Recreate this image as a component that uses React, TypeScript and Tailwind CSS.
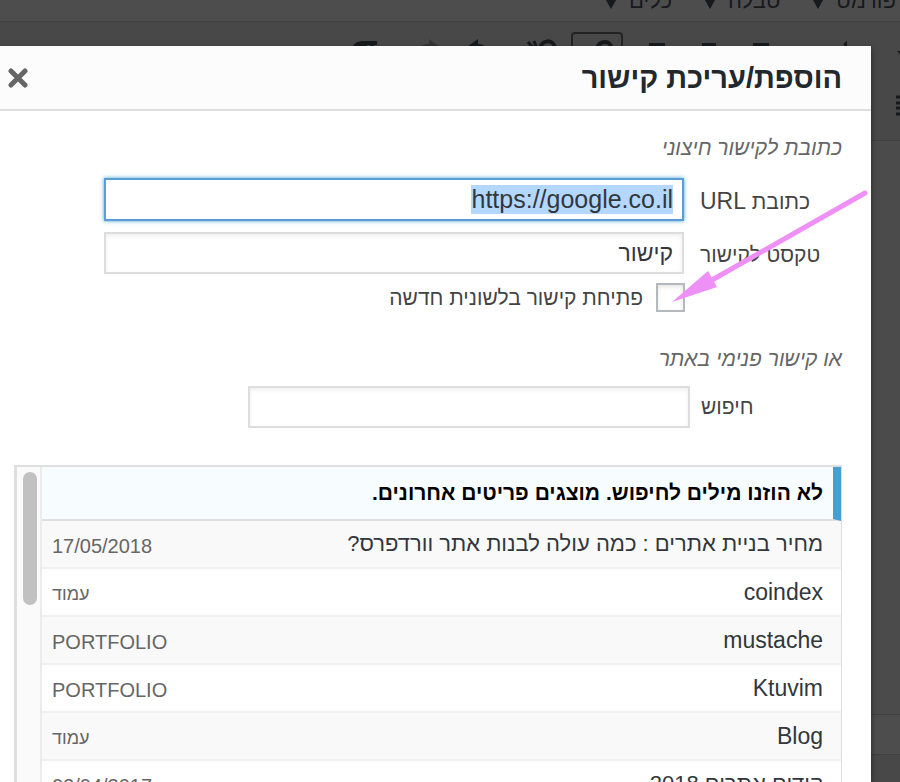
import { useEffect, useRef } from "react";
import type { ReactNode } from "react";

interface ToolProps {
  label: string;
  className?: string;
  children: ReactNode;
}

interface ResultProps {
  title: string;
  info: string;
  hebrewTitle?: boolean;
  hebrewInfo?: boolean;
}

const menus = ["פורמט", "טבלה", "כלים"];

const results: ResultProps[] = [
  { title: "מחיר בניית אתרים : כמה עולה לבנות אתר וורדפרס?", info: "17/05/2018", hebrewTitle: true },
  { title: "coindex", info: "עמוד", hebrewInfo: true },
  { title: "mustache", info: "PORTFOLIO" },
  { title: "Ktuvim", info: "PORTFOLIO" },
  { title: "Blog", info: "עמוד", hebrewInfo: true },
  { title: "קודים אתרים 2018", info: "02/04/2017", hebrewTitle: true },
];

function Tool({ label, className = "", children }: ToolProps) {
  return (
    <button
      type="button"
      aria-label={label}
      className={`flex h-12 w-[52px] shrink-0 items-center justify-center ${className}`}
    >
      <svg
        className="overflow-visible"
        width="32"
        height="32"
        viewBox="0 0 32 32"
        fill="none"
        stroke="currentColor"
        strokeWidth="4"
      >
        {children}
      </svg>
    </button>
  );
}

function Editor() {
  return (
    <div className="flex h-full flex-col bg-[#4b4b4b] text-[#17191b]">
      {/* Menu bar */}
      <div className="flex h-[22px] shrink-0 items-end gap-[31px] overflow-hidden border-b border-[#424242] bg-[#4d4d4d] pb-2 ps-1">
        {menus.map((menu) => (
          <button key={menu} type="button" className="flex shrink-0 items-center gap-[11px] text-[22px] leading-6">
            {menu}
            <svg width="14" height="16" viewBox="0 0 14 16" fill="currentColor">
              <path d="M-2 0h18L7 16z" />
            </svg>
          </button>
        ))}
      </div>

      {/* Toolbar */}
      <div className="h-[119px] shrink-0 border-b border-[#404040] bg-[#484848] pt-[10px]">
        <div className="flex">
          <Tool label="אפשרויות נוספות" className="-ms-[38px]">
            <path d="M1 11h12l-6 7z" fill="currentColor" stroke="none" />
          </Tool>
          <Tool label="רשימה ממוספרת" className="ms-[13px]">
            <path d="M13 5l2-2v7M0 14h10M0 24h10" strokeWidth="2" />
          </Tool>
          <Tool label="יישור לימין" className="ms-[34px]">
            <path d="M8 5h16M2 13h28M8 21h16M2 29h28" />
          </Tool>
          <Tool label="יישור למרכז">
            <path d="M9 5h14M2 13h28M9 21h14M2 29h28" />
          </Tool>
          <Tool label="יישור לשמאל">
            <path d="M8 5h16M2 13h28M8 21h16M2 29h28" />
          </Tool>
          <Tool label="קישור" className="ms-2 rounded border-2 border-[#232323]">
            <path d="M12 18L16 8C19 0 30 0 30 8l-6 9M22 14l-7 10" />
          </Tool>
          <Tool label="ביטול קישור" className="ms-1">
            <path d="M3 2l6 7M9 1l3 8" strokeWidth="3" />
            <path d="M15 9C16-1 29-1 30 8l-6 10" />
          </Tool>
          <Tool label="ביטול" className="ms-3">
            <path d="M3 9L17-1v5c7 0 13 6 13 17-3-6-7-8-13-8v7z" fill="currentColor" stroke="none" />
          </Tool>
          <Tool label="ביצוע מחדש" className="text-[#353535]">
            <path d="M33 9L20-1v5C12 4 6 10 6 21c3-6 7-8 14-8v7z" fill="currentColor" stroke="none" />
          </Tool>
          <Tool label="כיוון טקסט" className="ms-2">
            <path d="M28 1H14c-14 0-14 16 0 16v12h4V5h3v24h4V5h3z" fill="currentColor" stroke="none" />
          </Tool>
        </div>
        <div className="flex pt-0.5">
          <Tool label="רשימה" className="-ms-[38px]">
            <path d="M0 7h24M0 13h18M0 18h24M0 24h18" strokeWidth="3" />
          </Tool>
        </div>
      </div>

      <div className="grow" />
      <div className="h-10 shrink-0 border-t border-[#404040] bg-[#4d4d4d]" />
      <div className="h-7 shrink-0 border-t border-[#404040] bg-[#484848]" />
    </div>
  );
}

function Result({ title, info, hebrewTitle, hebrewInfo }: ResultProps) {
  return (
    <li className="flex h-12 shrink-0 items-center justify-between border-b-2 border-[#f1f1f1] pe-[10px] ps-[18px] odd:bg-[#f9f9f9]">
      <span className={`leading-7 text-[#32373c] ${hebrewTitle ? "text-[22px]" : "text-[23px]"}`}>{title}</span>
      <span className={`pt-1 leading-6 text-[#666] ${hebrewInfo ? "text-lg" : "text-xl"}`}>{info}</span>
    </li>
  );
}

function LinkDialog() {
  const urlRef = useRef<HTMLInputElement>(null);

  useEffect(() => {
    urlRef.current?.focus();
    urlRef.current?.select();
  }, []);

  return (
    <div
      role="dialog"
      aria-labelledby="link-title"
      className="absolute bottom-0 left-0 right-[29px] top-[46px] flex flex-col overflow-hidden bg-white text-[#444] shadow-[0_3px_6px_rgba(0,0,0,0.5)]"
    >
      <header className="flex h-[65px] shrink-0 items-center justify-between border-b-2 border-[#dfdfdf] bg-[#fcfcfc] pe-2 ps-[29px]">
        <h1 id="link-title" className="text-[29px] font-bold leading-9 text-[#23282d]">
          הוספת/עריכת קישור
        </h1>
        <button type="button" aria-label="סגירה">
          <svg width="20" height="20" viewBox="0 0 20 20" stroke="#666" strokeWidth="5" strokeLinecap="round">
            <path d="M3 3l14 14M17 3L3 17" />
          </svg>
        </button>
      </header>

      <div className="flex min-h-0 grow flex-col ps-[29px] pt-[21px]">
        <p className="text-[21px] italic leading-8 text-[#666]">כתובת לקישור חיצוני</p>

        <div className="mt-[14px] flex items-center gap-4 pe-[104px]">
          <label htmlFor="link-url" className="w-[142px] shrink-0 pt-1 text-end text-[21px] leading-7">
            כתובת <span className="text-[23px]">URL</span>
          </label>
          <input
            id="link-url"
            ref={urlRef}
            type="text"
            defaultValue="https://google.co.il"
            className="h-[43px] min-w-0 grow border-2 border-[#5b9dd9] px-[9px] text-[25px] text-[#32373c] shadow-[0_0_4px_rgba(30,140,190,0.8)] outline-none selection:bg-[#b3d7fd] selection:text-[#32373c]"
          />
        </div>

        <div className="mt-[11px] flex items-center gap-4 pe-[104px]">
          <label htmlFor="link-text" className="w-[142px] shrink-0 pt-1 text-end text-[21px] leading-7">
            טקסט לקישור
          </label>
          <input
            id="link-text"
            type="text"
            defaultValue="קישור"
            className="h-[42px] min-w-0 grow border-2 border-[#ddd] px-[9px] text-[23px] text-[#32373c] shadow-[inset_0_2px_4px_rgba(0,0,0,0.07)] outline-none"
          />
        </div>

        <label className="mt-[9px] flex items-center gap-[13px] ps-[157px] text-[21px] leading-7">
          <input
            type="checkbox"
            className="size-[29px] shrink-0 appearance-none border-2 border-[#b4b9be] bg-white shadow-[inset_0_2px_4px_rgba(0,0,0,0.1)]"
          />
          פתיחת קישור בלשונית חדשה
        </label>

        <p className="mt-[31px] text-[21px] italic leading-8 text-[#666]">או קישור פנימי באתר</p>

        <div className="mt-[11px] flex items-center gap-[11px] pe-[248px]">
          <label htmlFor="link-search" className="w-[141px] shrink-0 text-end text-[21px] leading-7">
            חיפוש
          </label>
          <input
            id="link-search"
            type="search"
            className="h-[42px] min-w-0 grow border-2 border-[#ddd] px-[9px] text-[23px] shadow-[inset_0_2px_4px_rgba(0,0,0,0.07)] outline-none"
          />
        </div>

        {/* Search results */}
        <div className="me-[14px] mt-[37px] flex min-h-0 grow overflow-hidden border-e-[3px] border-s border-t-2 border-[#dfdfdf]">
          <div className="flex min-w-0 grow flex-col">
            <p className="shrink-0 border-b-2 border-s-8 border-b-[#dfdfdf] border-s-[#46a0cf] bg-[#f7fcfe] py-3 ps-[10px] text-[21px] font-bold leading-7 text-black">
              לא הוזנו מילים לחיפוש. מוצגים פריטים אחרונים.
            </p>
            <ul className="flex flex-col">
              {results.map((result, index) => (
                <Result key={index} {...result} />
              ))}
            </ul>
          </div>
          <div className="w-[25px] shrink-0 border-s-2 border-[#ececec] bg-[#fafafa] ps-[3px] pt-[5px]">
            <div className="h-[133px] w-[14px] rounded-full bg-[#c1c1c1]" />
          </div>
        </div>
      </div>
    </div>
  );
}

export default function App() {
  return (
    <main dir="rtl" className="relative h-screen overflow-hidden font-['Liberation_Sans',sans-serif]">
      <Editor />
      <LinkDialog />
      <svg
        className="pointer-events-none absolute right-[30px] top-[188px]"
        width="200"
        height="116"
        viewBox="670 188 200 116"
        aria-hidden="true"
      >
        <path d="M865 193L712 280" stroke="#ee90f6" strokeWidth="5" strokeLinecap="round" />
        <path d="M672 302L708 271L717 287z" fill="#ee90f6" />
      </svg>
    </main>
  );
}
